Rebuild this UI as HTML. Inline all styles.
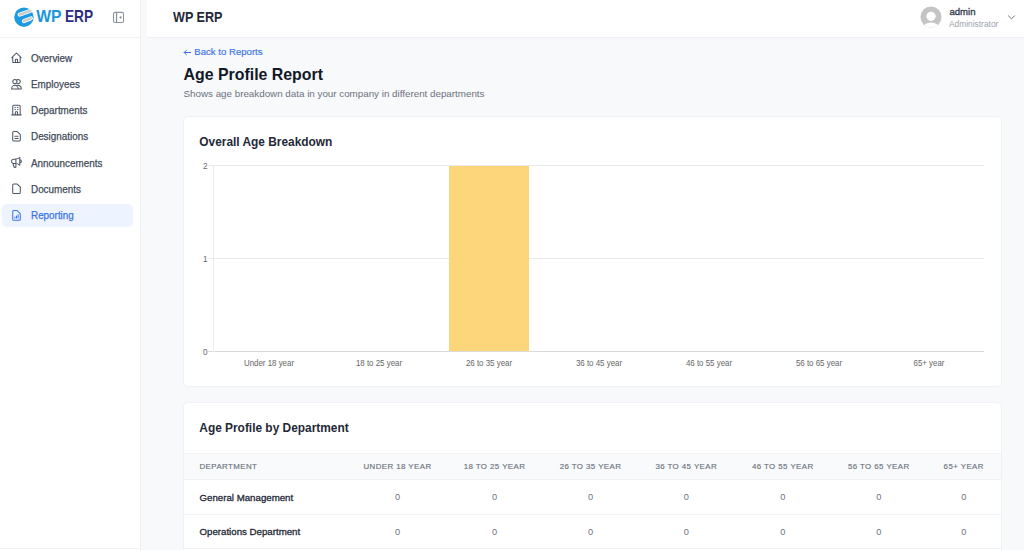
<!DOCTYPE html>
<html><head><meta charset="utf-8">
<style>
*{margin:0;padding:0;box-sizing:border-box}
html,body{width:1024px;height:550px;overflow:hidden;background:#f8f9fb;font-family:"Liberation Sans",sans-serif}
.a{position:absolute;line-height:1;white-space:nowrap}
#sb{position:absolute;left:0;top:0;width:141px;height:550px;background:#fff;border-right:1px solid #eef0f3}
#sbline{position:absolute;left:0;top:37px;width:140px;height:1px;background:#f1f2f4}
#hdr{position:absolute;left:147px;top:0;width:877px;height:38px;background:#fff;border-bottom:1px solid #eff0f3}
.nav{position:absolute;left:31px;font-size:10.5px;color:#414b59;-webkit-text-stroke:0.25px #414b59;transform:scaleX(0.94);transform-origin:0 0}
.ico{position:absolute;left:9px;width:14px;height:14px}
.card{position:absolute;left:184px;width:817px;background:#fff;border:1px solid #eff1f4;border-radius:5px}
.ttl{font-size:12px;font-weight:bold;color:#1f2937}
.yl{font-size:8.2px;color:#666}
.xl{font-size:8.5px;color:#666;text-align:center;width:110px;transform:scaleX(0.93)}
.gl{position:absolute;height:1px;background:#ebebeb}
table{position:absolute;left:0;top:49px;border-collapse:collapse;table-layout:fixed;width:817px}
th{height:26px;background:#f9fafb;font-size:7.9px;font-weight:normal;color:#6b7280;letter-spacing:0.42px;text-align:center;border-top:1px solid #f1f2f4;border-bottom:1px solid #f1f2f4;-webkit-text-stroke:0.15px #6b7280}
td{height:34.6px;font-size:9.2px;color:#6b7280;text-align:center;border-bottom:1px solid #f1f2f4;padding-top:1px}
th.l,td.l{text-align:left;padding-left:15.5px}
td.l{color:#1f2937;font-size:9.7px;-webkit-text-stroke:0.3px #1f2937;padding-top:1px}
</style></head><body>

<div id="sb">
  <div id="sbline"></div>
  <!-- logo -->
  <svg class="a" style="left:13px;top:6px" width="22" height="22" viewBox="0 0 22 22">
    <circle cx="10.95" cy="11.2" r="9.7" fill="#1d9be2"/>
    <path d="M6.6 8.6 L17.4 4.9" stroke="#fff" stroke-width="4" stroke-linecap="round"/>
    <path d="M10.9 15.1 L18 12.3" stroke="#fff" stroke-width="4" stroke-linecap="round"/>
    <path d="M6.6 8.6 L17.4 4.9" stroke="#c9c9c9" stroke-width="2.2" stroke-linecap="round"/>
    <path d="M10.9 15.1 L18 12.3" stroke="#c9c9c9" stroke-width="2.2" stroke-linecap="round"/>
  </svg>
  <svg class="a" style="left:35px;top:6px" width="60" height="20" viewBox="0 0 60 20">
    <text x="1.2" y="15.8" font-family="Liberation Sans" font-weight="bold" font-size="16.4" fill="#1a96dc" textLength="25.3" lengthAdjust="spacingAndGlyphs">WP</text>
    <text x="29.9" y="15.8" font-family="Liberation Sans" font-weight="bold" font-size="16.4" fill="#2b2e80" textLength="28.1" lengthAdjust="spacingAndGlyphs">ERP</text>
  </svg>
  <!-- collapse icon -->
  <svg class="a" style="left:112px;top:11px" width="13" height="13" viewBox="0 0 13 13">
    <rect x="1.5" y="1.4" width="10" height="10.1" rx="1.6" fill="none" stroke="#8e94a0" stroke-width="1.1"/>
    <path d="M4.6 1.4 V11.5" stroke="#858b97" stroke-width="1.1"/>
    <path d="M9.3 5.1 L7.1 6.45 L9.3 7.8 Z" fill="#6f7582"/>
  </svg>

  <!-- nav -->
<svg class="a" style="left:10px;top:51px" width="15" height="15" viewBox="-0.17 -0.74 28.30 28.30" fill="none" stroke="#4b5563" stroke-width="1.9" stroke-linecap="round" stroke-linejoin="round"><path d="M3 12l2-2m0 0l7-7 7 7M5 10v10a1 1 0 001 1h3m10-11l2 2m-2-2v10a1 1 0 01-1 1h-3m-6 0a1 1 0 001-1v-4a1 1 0 011-1h2a1 1 0 011 1v4a1 1 0 001 1m-6 0h6"/></svg>
<div class="a nav" style="top:53px">Overview</div>
<svg class="a" style="left:10px;top:77px" width="15" height="15" viewBox="-0.15 -1.64 28.04 28.04" fill="none" stroke="#4b5563" stroke-width="1.9" stroke-linecap="round" stroke-linejoin="round"><path d="M12 4.354a4 4 0 110 5.292M15 21H3v-1a6 6 0 0112 0v1zm0 0h6v-1a6 6 0 00-9-5.197M13 7a4 4 0 11-8 0 4 4 0 018 0z"/></svg>
<div class="a nav" style="top:79.1px">Employees</div>
<svg class="a" style="left:10px;top:103px" width="15" height="15" viewBox="-0.17 -1.40 28.30 28.30" fill="none" stroke="#4b5563" stroke-width="1.9" stroke-linecap="round" stroke-linejoin="round"><path d="M19 21V5a2 2 0 00-2-2H7a2 2 0 00-2 2v16m14 0h2m-2 0h-5m-9 0H3m2 0h5M9 7h1m-1 4h1m4-4h1m-1 4h1m-5 10v-5a1 1 0 011-1h2a1 1 0 011 1v5m-4 0h4"/></svg>
<div class="a nav" style="top:105.3px">Departments</div>
<svg class="a" style="left:10px;top:129px" width="15" height="15" viewBox="-0.04 -1.43 27.78 27.78" fill="none" stroke="#4b5563" stroke-width="1.9" stroke-linecap="round" stroke-linejoin="round"><path d="M9 12h6m-6 4h6m2 5H7a2 2 0 01-2-2V5a2 2 0 012-2h5.586a1 1 0 01.707.293l5.414 5.414a1 1 0 01.293.707V19a2 2 0 01-2 2z"/></svg>
<div class="a nav" style="top:131.4px">Designations</div>
<svg class="a" style="left:9px;top:155px" width="15" height="15" viewBox="-1.55 -1.55 27.27 27.27" fill="none" stroke="#4b5563" stroke-width="1.9" stroke-linecap="round" stroke-linejoin="round"><path d="M11 5.882V19.24a1.76 1.76 0 01-3.417.592l-2.147-6.15M18 13a3 3 0 100-6M5.436 13.683A4.001 4.001 0 017 6h1.832c4.1 0 7.625-1.234 9.168-3v14c-1.543-1.766-5.067-3-9.168-3H7a3.988 3.988 0 01-1.564-.317z"/></svg>
<div class="a nav" style="top:157.5px">Announcements</div>
<svg class="a" style="left:10px;top:182px" width="15" height="15" viewBox="-0.04 -0.50 27.78 27.78" fill="none" stroke="#4b5563" stroke-width="1.9" stroke-linecap="round" stroke-linejoin="round"><path d="M7 21h10a2 2 0 002-2V9.414a1 1 0 00-.293-.707l-5.414-5.414A1 1 0 0012.586 3H7a2 2 0 00-2 2v14a2 2 0 002 2z"/></svg>
<div class="a nav" style="top:183.7px">Documents</div>
<div class="a" style="left:2px;top:203.6px;width:131px;height:23.4px;background:#eef4ff;border-radius:5px"></div>
<svg class="a" style="left:10px;top:208px" width="15" height="15" viewBox="-0.04 -1.61 27.78 27.78" fill="none" stroke="#3a72e8" stroke-width="1.9" stroke-linecap="round" stroke-linejoin="round"><path d="M9 17v-2m3 2v-4m3 4v-6m2 10H7a2 2 0 01-2-2V5a2 2 0 012-2h5.586a1 1 0 01.707.293l5.414 5.414a1 1 0 01.293.707V19a2 2 0 01-2 2z"/></svg>
<div class="a nav" style="top:209.8px;color:#3a72e8;-webkit-text-stroke:0.25px #3a72e8">Reporting</div>

  <div class="a" style="left:0;top:548px;width:140px;height:1px;background:#f1f2f4"></div>
</div>

<div id="hdr">
  <div class="a" style="left:25.9px;top:9.8px;font-size:14px;font-weight:bold;color:#1f2937;transform:scaleX(0.9);transform-origin:0 0">WP ERP</div>
  <svg class="a" style="left:772.5px;top:5.8px" width="22" height="22" viewBox="0 0 22 22">
    <defs><clipPath id="cc"><circle cx="11" cy="11" r="10.5"/></clipPath></defs>
    <circle cx="11" cy="11" r="10.5" fill="#c4c4c4"/>
    <g clip-path="url(#cc)" fill="#fff">
      <circle cx="11" cy="10.3" r="4.6"/>
      <ellipse cx="11" cy="22" rx="8" ry="5.6"/>
    </g>
  </svg>
  <div class="a" style="left:802.4px;top:7.2px;font-size:9.6px;color:#374151;-webkit-text-stroke:0.35px #374151">admin</div>
  <div class="a" style="left:802px;top:20.2px;font-size:8.4px;color:#9ca3af">Administrator</div>
  <svg class="a" style="left:860px;top:14px" width="9" height="7" viewBox="0 0 9 7"><path d="M1.2 1.6 L4.5 4.9 L7.8 1.6" fill="none" stroke="#6b7280" stroke-width="1"/></svg>
</div>

<!-- page head -->
<svg class="a" style="left:183px;top:48px" width="9" height="9" viewBox="0 0 9 9"><path d="M7.6 4.5H1.2M3.5 2.2L1.2 4.5l2.3 2.3" fill="none" stroke="#3b72e6" stroke-width="1" stroke-linecap="round" stroke-linejoin="round"/></svg>
<div class="a" style="left:194.3px;top:47.3px;font-size:9.6px;color:#3b72e6;-webkit-text-stroke:0.15px #3b72e6">Back to Reports</div>
<div class="a" style="left:183.5px;top:66.9px;font-size:15.9px;font-weight:bold;color:#111827">Age Profile Report</div>
<div class="a" style="left:183.5px;top:89.2px;font-size:9.8px;color:#6b7280">Shows age breakdown data in your company in different departments</div>

<!-- card 1 -->
<div class="card" style="left:183px;top:116px;width:819px;height:271px"></div>
<div class="a ttl" style="left:199.3px;top:136.6px;font-size:11.9px">Overall Age Breakdown</div>
<div class="gl" style="left:208px;top:165px;width:776px"></div>
<div class="gl" style="left:208px;top:258px;width:776px"></div>
<div class="gl" style="left:208px;top:351px;width:776px;background:#dadada"></div>
<div class="a" style="left:213px;top:165px;width:1px;height:187px;background:#ebebeb"></div>
<div class="a yl" style="left:203px;top:162.6px">2</div>
<div class="a yl" style="left:203px;top:255.6px">1</div>
<div class="a yl" style="left:203px;top:348.6px">0</div>
<div class="a" style="left:449px;top:165.5px;width:80px;height:185.5px;background:#fdd67b"></div>
<div class="a xl" style="left:213.8px;top:358.9px">Under 18 year</div>
<div class="a xl" style="left:323.8px;top:358.9px">18 to 25 year</div>
<div class="a xl" style="left:433.9px;top:358.9px">26 to 35 year</div>
<div class="a xl" style="left:543.9px;top:358.9px">36 to 45 year</div>
<div class="a xl" style="left:653.9px;top:358.9px">46 to 55 year</div>
<div class="a xl" style="left:764px;top:358.9px">56 to 65 year</div>
<div class="a xl" style="left:874px;top:358.9px">65+ year</div>

<!-- card 2 -->
<div class="card" style="left:183px;top:402px;width:819px;height:170px;overflow:hidden">
  <table style="top:50px">
    <colgroup><col style="width:165px"><col style="width:97px"><col style="width:97px"><col style="width:95px"><col style="width:96.5px"><col style="width:96.5px"><col style="width:95.5px"><col style="width:74.5px"></colgroup>
    <tr><th class="l">DEPARTMENT</th><th>UNDER 18 YEAR</th><th>18 TO 25 YEAR</th><th>26 TO 35 YEAR</th><th>36 TO 45 YEAR</th><th>46 TO 55 YEAR</th><th>56 TO 65 YEAR</th><th>65+ YEAR</th></tr>
    <tr><td class="l">General Management</td><td>0</td><td>0</td><td>0</td><td>0</td><td>0</td><td>0</td><td>0</td></tr>
    <tr><td class="l">Operations Department</td><td>0</td><td>0</td><td>0</td><td>0</td><td>0</td><td>0</td><td>0</td></tr>
  </table>
</div>
<div class="a ttl" style="left:199.3px;top:422.8px;font-size:11.9px">Age Profile by Department</div>

</body></html>
